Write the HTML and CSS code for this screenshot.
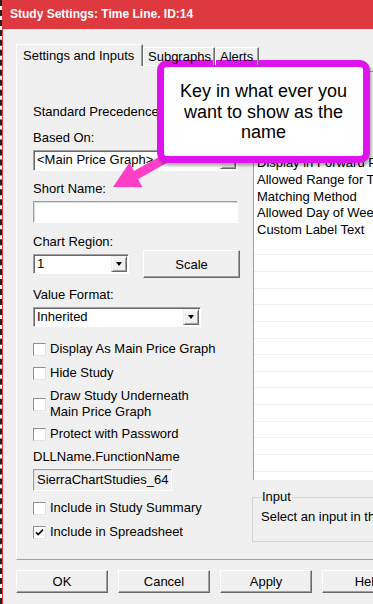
FILE: index.html
```html
<!DOCTYPE html>
<html lang="en">
<head>
    <meta charset="UTF-8">
    <meta name="viewport" content="width=device-width, initial-scale=1.0">
    <title>Study Settings: Time Line. ID:14</title>
    <link rel="stylesheet" href="styles.css">
</head>
<body>
    <div class="window">
        <div class="titlebar">Study Settings: Time Line. ID:14</div>

        <div class="client">
            <div class="tabs">
                <div class="tab selected">Settings and Inputs</div>
                <div class="tab tab-subgraphs">Subgraphs</div>
                <div class="tab tab-alerts">Alerts</div>
            </div>

            <div class="panel">
                <!-- left column: study settings -->
                <div class="settings">
                    <p class="note">Standard Precedence</p>

                    <div class="field">
                        <label class="field-label">Based On:</label>
                        <div class="combo combo-wide">
                            <span class="combo-text">&lt;Main Price Graph&gt;</span>
                            <span class="drop"><i class="caret"></i></span>
                        </div>
                    </div>

                    <div class="field">
                        <label class="field-label">Short Name:</label>
                        <div class="edit edit-wide"></div>
                    </div>

                    <div class="field field-region">
                        <label class="field-label">Chart Region:</label>
                        <div class="region-row">
                            <div class="combo combo-small">
                                <span class="combo-text">1</span>
                                <span class="drop"><i class="caret"></i></span>
                            </div>
                            <button class="btn btn-scale">Scale</button>
                        </div>
                    </div>

                    <div class="field field-format">
                        <label class="field-label">Value Format:</label>
                        <div class="combo combo-medium">
                            <span class="combo-text">Inherited</span>
                            <span class="drop"><i class="caret"></i></span>
                        </div>
                    </div>

                    <div class="checks">
                        <div class="check"><span class="box"></span><span>Display As Main Price Graph</span></div>
                        <div class="check check-hide"><span class="box"></span><span>Hide Study</span></div>
                        <div class="check check-under"><span class="box"></span><span>Draw Study Underneath<br>Main Price Graph</span></div>
                        <div class="check check-protect"><span class="box"></span><span>Protect with Password</span></div>
                    </div>

                    <div class="field field-dll">
                        <label class="field-label">DLLName.FunctionName</label>
                        <div class="edit edit-readonly">SierraChartStudies_64</div>
                    </div>

                    <div class="check check-summary"><span class="box"></span><span>Include in Study Summary</span></div>
                    <div class="check check-sheet">
                        <span class="box">
                            <svg width="9" height="9" viewBox="0 0 9 9"><polyline points="1,4.2 3.2,6.6 8,1.6" fill="none" stroke="#000" stroke-width="1.6"/></svg>
                        </span>
                        <span>Include in Spreadsheet</span>
                    </div>
                </div>

                <!-- right column: inputs list (top rows sit under the callout) -->
                <div class="inputs">
                    <div class="input-list">
                        <div class="row"></div>
                        <div class="row"></div>
                        <div class="row"></div>
                        <div class="row"></div>
                        <div class="row"></div>
                        <div class="row">Display in Forward Projection Area</div>
                        <div class="row">Allowed Range for Time</div>
                        <div class="row">Matching Method</div>
                        <div class="row">Allowed Day of Week</div>
                        <div class="row">Custom Label Text</div>
                        <div class="row empty"></div>
                        <div class="row empty"></div>
                        <div class="row empty"></div>
                        <div class="row empty"></div>
                        <div class="row empty"></div>
                        <div class="row empty"></div>
                        <div class="row empty"></div>
                        <div class="row empty"></div>
                        <div class="row empty"></div>
                        <div class="row empty"></div>
                        <div class="row empty"></div>
                        <div class="row empty"></div>
                        <div class="row empty"></div>
                        <div class="row empty"></div>
                    </div>

                    <fieldset class="input-group">
                        <legend>Input</legend>
                        <p class="input-hint">Select an input in the list above</p>
                    </fieldset>
                </div>
            </div>

            <div class="buttons">
                <button class="btn btn-dialog">OK</button>
                <button class="btn btn-dialog">Cancel</button>
                <button class="btn btn-dialog">Apply</button>
                <button class="btn btn-dialog">Help</button>
            </div>
        </div>

        <svg class="arrow" width="80" height="50" viewBox="100 150 80 50">
            <polygon points="113,187 142.5,187.3 138.1,178.9 172.1,160 167.9,152 133.9,170.9 129.5,162.5" fill="#ff3ec8"/>
        </svg>

        <div class="callout">Key in what ever you<br>want to show as the<br>name</div>
    </div>
</body>
</html>
```

FILE: styles.css
```css
* {
    margin: 0;
    padding: 0;
    box-sizing: border-box;
}

html,
body {
    overflow: hidden;
}

body {
    width: 373px;
    height: 604px;
    background: #f0f0f0;
    border-left: 2px dashed #222;
    font-family: 'Liberation Sans', Arial, sans-serif;
    font-size: 13px;
    color: #000;
}

.window {
    position: relative;
    width: 470px;
    height: 604px;
    border-left: 1px solid #e0393e;
}

.titlebar {
    height: 29px;
    padding-left: 7px;
    background: #dd393e;
    color: #fff;
    font-size: 12px;
    font-weight: bold;
    line-height: 28px;
}

.client {
    padding: 15px 0 0 13px;
}

/* tab strip */
.tabs {
    display: flex;
    align-items: flex-end;
    height: 21px;
    position: relative;
    z-index: 1;
}

.tab {
    height: 18px;
    padding-left: 4px;
    line-height: 18px;
    border-top: 1px solid #fff;
    border-left: 1px solid #fff;
    border-right: 1px solid #696969;
    box-shadow: inset -1px 0 #a0a0a0;
    white-space: nowrap;
    overflow: hidden;
}

.tab.selected {
    width: 127px;
    height: 22px;
    margin-bottom: -1px;
    padding-left: 6px;
    line-height: 21px;
    background: #f0f0f0;
}

.tab-subgraphs {
    width: 72px;
}

.tab-alerts {
    width: 44px;
}

.panel {
    display: flex;
    height: 495px;
    border-top: 1px solid #fff;
    border-left: 1px solid #fff;
    border-bottom: 1px solid #a0a0a0;
}

/* left column */
.settings {
    width: 236px;
    padding: 38px 0 0 16px;
}

.note,
.field-label {
    display: block;
    line-height: 16px;
}

.field {
    margin-top: 10px;
}

.field-region {
    margin-top: 11px;
}

.field-format {
    margin-top: 9px;
}

.field-dll {
    margin-top: 7px;
}

.combo,
.edit {
    margin-top: 4px;
}

.combo {
    display: flex;
    height: 21px;
    background: #fff;
    border: 1px solid;
    border-color: #a0a0a0 #fff #fff #a0a0a0;
    box-shadow: inset 1px 1px #696969;
}

.combo-wide {
    width: 205px;
}

.combo-small {
    width: 96px;
    height: 20px;
    margin-top: 0;
}

.combo-medium {
    width: 168px;
    height: 20px;
}

.combo-text {
    flex: 1;
    padding-left: 3px;
    line-height: 18px;
    white-space: nowrap;
    overflow: hidden;
}

.drop {
    display: flex;
    align-items: center;
    justify-content: center;
    width: 16px;
    margin: 1px 1px 1px 0;
    background: #f0f0f0;
    border: 1px solid;
    border-color: #f0f0f0 #696969 #696969 #f0f0f0;
    box-shadow: inset 1px 1px #fff, inset -1px -1px #a0a0a0;
}

.caret {
    width: 0;
    height: 0;
    border-left: 3px solid transparent;
    border-right: 3px solid transparent;
    border-top: 4px solid #000;
}

.edit {
    height: 22px;
    padding-left: 3px;
    line-height: 20px;
    background: #fff;
    border: 1px solid;
    border-color: #a0a0a0 #fff #fff #a0a0a0;
    box-shadow: inset 1px 1px #d8d8d8;
}

.edit-wide {
    width: 205px;
}

.edit-readonly {
    width: 139px;
    background: #f0f0f0;
    border-color: #a0a0a0 #fff #fff #a0a0a0;
    box-shadow: inset 1px 1px #e3e3e3;
}

.region-row {
    display: flex;
    align-items: center;
    height: 28px;
}

.btn {
    background: #f0f0f0;
    border: 1px solid;
    border-color: #fff #696969 #696969 #fff;
    box-shadow: inset -1px -1px #a0a0a0;
    font-family: inherit;
    font-size: 13px;
    color: #000;
}

.btn-scale {
    width: 97px;
    height: 28px;
    margin-left: 14px;
}

/* checkboxes */
.checks {
    margin-top: 14px;
    display: flex;
    flex-direction: column;
}

.check {
    display: flex;
    align-items: center;
    gap: 4px;
    line-height: 16px;
}

.check-hide {
    margin-top: 8px;
}

.check-under {
    margin-top: 7px;
}

.check-protect {
    margin-top: 6px;
}

.box {
    display: flex;
    align-items: center;
    justify-content: center;
    width: 13px;
    height: 13px;
    background: #fff;
    border: 1px solid;
    border-color: #8e8e8e #e3e3e3 #e3e3e3 #8e8e8e;
}

.check-summary {
    margin-top: 9px;
}

.check-sheet {
    margin-top: 8px;
}

/* right column */
.inputs {
    flex: 1;
    display: flex;
    flex-direction: column;
    padding-top: 5px;
}

.input-list {
    height: 409px;
    background: #fff;
    border-top: 1px solid #a0a0a0;
    border-left: 1px solid #a0a0a0;
    overflow: hidden;
}

.row {
    height: 16.67px;
    padding-left: 3px;
    line-height: 16.67px;
    white-space: nowrap;
    overflow: hidden;
}

.row.empty {
    border-bottom: 1px solid #efefef;
}

.input-group {
    height: 52px;
    margin: 10px 0 0 -1px;
    padding: 0 0 0 8px;
    border: 1px solid #d5d5d5;
}

.input-group legend {
    padding: 0 1px;
    line-height: 14px;
}

.input-hint {
    margin-top: 5px;
    line-height: 16px;
    white-space: nowrap;
}

/* dialog buttons */
.buttons {
    display: flex;
    gap: 10px;
    margin-top: 10px;
}

.btn-dialog {
    width: 92px;
    height: 23px;
    flex-shrink: 0;
}

/* annotation overlay */
.arrow {
    position: absolute;
    left: 97px;
    top: 150px;
}

.callout {
    position: absolute;
    left: 154px;
    top: 60px;
    width: 213px;
    height: 103px;
    padding-top: 14px;
    background: #fff;
    border: 7px solid #dd14ee;
    border-radius: 10px;
    box-shadow: 2px 3px 3px rgba(0, 0, 0, 0.3);
    font-size: 18px;
    line-height: 20.5px;
    text-align: center;
}
```
